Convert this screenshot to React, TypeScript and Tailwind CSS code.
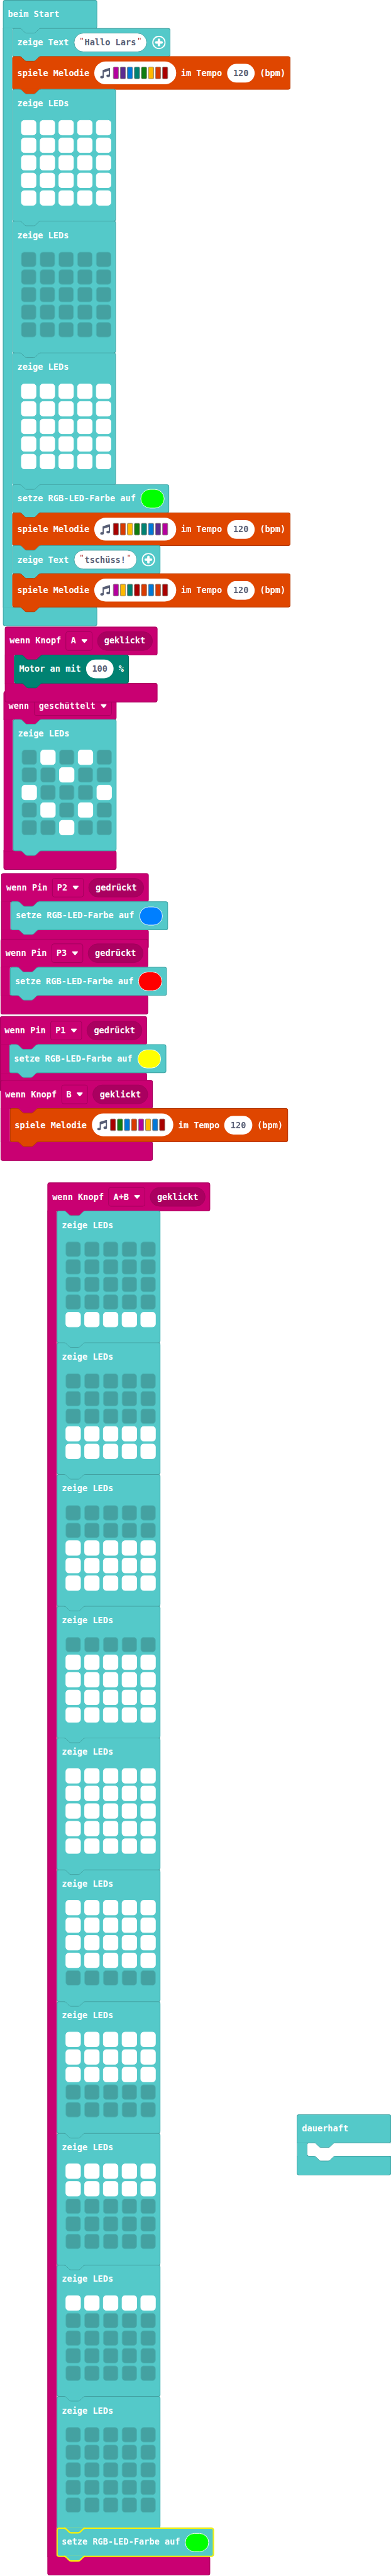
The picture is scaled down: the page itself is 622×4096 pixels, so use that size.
import type { ReactNode } from "react";
import { FaMusic } from "react-icons/fa";

type Tone = "basic" | "music" | "motor" | "input";

const fill: Record<Tone, string> = {
  basic: "bg-[#54c9c9]",
  music: "bg-[#df4600]",
  motor: "bg-[#008272]",
  input: "bg-[#c90072]",
};
const edge: Record<Tone, string> = {
  basic: "shadow-[inset_0_0_0_1px_#43a1a1]",
  music: "shadow-[inset_0_0_0_1px_#b23800]",
  motor: "shadow-[inset_0_0_0_1px_#00685b]",
  input: "shadow-[inset_0_0_0_1px_#a1005b]",
};
const armEdge: Record<Tone, string> = {
  basic: "border-[#43a1a1]",
  music: "border-[#b23800]",
  motor: "border-[#00685b]",
  input: "border-[#a1005b]",
};
const hex: Record<Tone | "hole", string> = {
  basic: "#54c9c9",
  music: "#df4600",
  motor: "#008272",
  input: "#c90072",
  hole: "#ffffff",
};
const edgeHex: Record<Tone, string> = {
  basic: "#43a1a1",
  music: "#b23800",
  motor: "#00685b",
  input: "#a1005b",
};

const CURVE = "c2 0 3 1 4 2l4 4c1 1 2 2 4 2h12c2 0 3-1 4-2l4-4c1-1 2-2 4-2";

function Notch({ color, line, width = 1, bottom }: { color: string; line: string; width?: number; bottom?: boolean }) {
  return (
    <svg
      className={"pointer-events-none absolute left-0 z-10 overflow-visible " + (bottom ? "-bottom-[8px]" : "top-0")}
      width="50"
      height="9"
      viewBox="0 0 50 9"
    >
      <path d={"M12.5 -0.8v1.3" + CURVE + "v-1.3z"} fill={color} />
      <path d={"M12.5 0.5" + CURVE} fill="none" stroke={line} strokeWidth={width} />
    </svg>
  );
}

type BlockProps = {
  tone: Tone;
  above: Tone;
  height: string;
  last?: boolean;
  selected?: boolean;
  children: ReactNode;
};

function Block({ tone, above, height, last, selected, children }: BlockProps) {
  const line = selected ? "#fff200" : edgeHex[tone];
  const ring = selected
    ? "shadow-[inset_0_0_0_1.6px_#fff200,0_0_0_0.8px_#fff200]"
    : edge[tone];
  return (
    <div className={"relative z-10 -mb-px w-max rounded-[4px] " + fill[tone] + " " + ring + " " + height}>
      <Notch color={hex[above]} line={line} width={selected ? 2.4 : 1} />
      {children}
      {last && <Notch color={hex[tone]} line={line} width={selected ? 2.4 : 1} bottom />}
    </div>
  );
}

function Row({ children }: { children: ReactNode }) {
  return <div className="flex h-full items-center gap-[8.4px] px-[8.5px]">{children}</div>;
}

function Label({ children }: { children: ReactNode }) {
  return <span className="whitespace-pre">{children}</span>;
}

function NumberField({ value }: { value: number }) {
  return (
    <span className="flex h-8 w-[47.6px] items-center justify-center rounded-full bg-white text-[#575e75]">
      {value}
    </span>
  );
}

function ColorField({ color }: { color: string }) {
  return <span className={"h-[32.5px] w-[40.6px] rounded-full border border-white " + color} />;
}

function ShowText({ text, above }: { text: string; above: Tone }) {
  return (
    <Block tone="basic" above={above} height="h-[49px]">
      <Row>
        <Label>zeige Text</Label>
        <span className="flex h-[33px] items-center rounded-full border border-[#43a1a1] bg-white px-[10px] text-[#575e75]">
          <span className="w-[7.5px] -translate-y-[3px] font-['Liberation_Sans'] text-[15px] font-normal text-[#b03030]">"</span>
          <Label>{text}</Label>
          <span className="w-[8px] -translate-y-[3px] pl-[3px] font-['Liberation_Sans'] text-[15px] font-normal text-[#b03030]">"</span>
        </span>
        <svg width="23" height="23" viewBox="0 0 23 23" fill="none" stroke="white">
          <circle cx="11.5" cy="11.5" r="10.5" strokeWidth="2" />
          <path d="M11.5 6.9v9.2M6.9 11.5h9.2" strokeWidth="4.2" strokeLinecap="round" />
        </svg>
      </Row>
    </Block>
  );
}

const notes: Record<string, string> = {
  p: "bg-[#b4009e]",
  v: "bg-[#5c2d91]",
  b: "bg-[#0078d7]",
  t: "bg-[#008272]",
  g: "bg-[#107c10]",
  y: "bg-[#ffb900]",
  o: "bg-[#d83b01]",
  r: "bg-[#a80000]",
};

function Melody({ tune, above, last }: { tune: string; above: Tone; last?: boolean }) {
  return (
    <Block tone="music" above={above} height="h-[57.2px]" last={last}>
      <Row>
        <Label>spiele Melodie</Label>
        <span className="flex h-[39px] w-[139.5px] items-center rounded-full bg-white pl-[9.5px]">
          <FaMusic className="mr-[5px] h-[18px] w-[17px] text-[#575e75]" preserveAspectRatio="none" />
          <span className="flex gap-[2px]">
            {tune.split("").map((n, i) => (
              <span key={i} className={"h-[21px] w-[10px] rounded-[2px] border border-[#8a8078] " + notes[n]} />
            ))}
          </span>
        </span>
        <Label>im Tempo</Label>
        <NumberField value={120} />
        <Label>(bpm)</Label>
      </Row>
    </Block>
  );
}

function SetColor({ color, above, last, selected }: { color: string; above: Tone; last?: boolean; selected?: boolean }) {
  return (
    <Block tone="basic" above={above} height="h-[49px]" last={last} selected={selected}>
      <Row>
        <Label>setze RGB-LED-Farbe auf</Label>
        <ColorField color={color} />
      </Row>
    </Block>
  );
}

function Leds({ rows, above, last }: { rows: string[]; above: Tone; last?: boolean }) {
  return (
    <Block tone="basic" above={above} height="h-[225.9px]" last={last}>
      <div className="w-[177.2px]">
        <div className="flex h-[49px] items-center px-[8.5px]">zeige LEDs</div>
        <div className="grid w-max grid-cols-5 gap-x-1.5 gap-y-1 pl-[14.8px] pt-[3.5px]">
          {rows
            .join("")
            .split("")
            .map((c, i) => (
              <span
                key={i}
                className={
                  "size-[26px] rounded-[5.5px] border " +
                  (c === "#" ? "border-white bg-white" : "border-[#4bb5b5] bg-[#44a1a1]")
                }
              />
            ))}
        </div>
      </div>
    </Block>
  );
}

function Dropdown({ value }: { value: string }) {
  return (
    <span className="flex h-[33px] items-center gap-[9px] rounded-[4px] border border-[#a1005b] px-[7.5px]">
      <Label>{value}</Label>
      <svg width="10.4" height="7" viewBox="0 0 10.4 7" fill="white">
        <path d="M1.2 0.2h8c1 0 1.4.8.8 1.5L6.2 6.2c-.6.7-1.4.7-2 0L.4 1.7C-.2 1 .2.2 1.2.2z" />
      </svg>
    </span>
  );
}

function EventHead({ label, value, action }: { label: string; value: string; action?: string }) {
  return (
    <div className="flex h-full items-center gap-[8px] px-[8.3px]">
      <Label>{label}</Label>
      <Dropdown value={value} />
      {action && (
        <span className="flex h-[33px] items-center rounded-full border border-[#a1005b] bg-[#aa0060] px-[11.3px]">
          {action}
        </span>
      )}
    </div>
  );
}

type HatProps = { tone: Tone; place: string; head: ReactNode; width?: string; children: ReactNode };

function Hat({ tone, place, head, width = "w-max", children }: HatProps) {
  return (
    <section className={"absolute " + place}>
      <div className={width}>
        <div className={"-mb-px h-[49px] rounded-[4px] rounded-bl-none " + fill[tone] + " " + edge[tone]}>{head}</div>
        <div className="flex w-0">
          <div className={"relative z-10 w-4 shrink-0 border-l " + fill[tone] + " " + armEdge[tone]} />
          <div className="pb-px">{children}</div>
        </div>
        <div className={"-mt-px h-[33px] rounded-[4px] rounded-tl-none " + fill[tone] + " " + edge[tone]} />
      </div>
    </section>
  );
}

const ON = "#####";
const OFF = ".....";
const full = [ON, ON, ON, ON, ON];
const blank = [OFF, OFF, OFF, OFF, OFF];
const wave = [
  [OFF, OFF, OFF, OFF, ON],
  [OFF, OFF, OFF, ON, ON],
  [OFF, OFF, ON, ON, ON],
  [OFF, ON, ON, ON, ON],
  full,
  [ON, ON, ON, ON, OFF],
  [ON, ON, ON, OFF, OFF],
  [ON, ON, OFF, OFF, OFF],
  [ON, OFF, OFF, OFF, OFF],
  blank,
];

export default function App() {
  return (
    <main className="h-[4096px] w-[622px] overflow-hidden bg-white">
      <div className="relative h-[4398px] w-[668px] origin-top-left scale-[0.9313] font-['DejaVu_Sans_Mono',monospace] text-[14.62px] leading-none font-bold text-white">
        <Hat
          tone="basic"
          place="left-[5px] top-[0.3px]"
          width="w-[161px]"
          head={<div className="flex h-full items-center px-[8.5px]">beim Start</div>}
        >
          <ShowText text="Hallo Lars" above="basic" />
          <Melody tune="pvbtgyor" above="basic" />
          <Leds rows={full} above="music" />
          <Leds rows={blank} above="basic" />
          <Leds rows={full} above="basic" />
          <SetColor color="bg-[#00ff00]" above="basic" />
          <Melody tune="roygtbvp" above="basic" />
          <ShowText text="tschüss!" above="music" />
          <Melody tune="pytrobor" above="basic" last />
        </Hat>

        <Hat
          tone="input"
          place="left-[6.2px] top-[1179.6px]"
          head={
            <div className="h-full translate-y-[1px]">
              <EventHead label="wenn" value="geschüttelt" />
            </div>
          }
        >
          <Leds rows={[".#.#.", "..#..", "#...#", ".#.#.", "..#.."]} above="input" last />
        </Hat>

        <Hat
          tone="input"
          place="left-[8.2px] top-[1069.5px] z-20"
          head={<EventHead label="wenn Knopf" value="A" action="geklickt" />}
        >
          <Block tone="motor" above="input" height="h-[49px]" last>
            <Row>
              <Label>Motor an mit</Label>
              <NumberField value={100} />
              <Label>%</Label>
            </Row>
          </Block>
        </Hat>

        <Hat
          tone="input"
          place="left-[2.4px] top-[1491.3px] z-10"
          head={<EventHead label="wenn Pin" value="P2" action="gedrückt" />}
        >
          <SetColor color="bg-[#007fff]" above="input" last />
        </Hat>

        <Hat
          tone="input"
          place="left-[1.2px] top-[1602.8px] z-20"
          head={<EventHead label="wenn Pin" value="P3" action="gedrückt" />}
        >
          <SetColor color="bg-[#ff0000]" above="input" last />
        </Hat>

        <Hat
          tone="input"
          place="left-[-0.5px] top-[1735.3px] z-10"
          head={<EventHead label="wenn Pin" value="P1" action="gedrückt" />}
        >
          <SetColor color="bg-[#ffff00]" above="input" last />
        </Hat>

        <Hat
          tone="input"
          place="left-[0.6px] top-[1844.4px] z-20"
          head={<EventHead label="wenn Knopf" value="B" action="geklickt" />}
        >
          <Melody tune="rgbopybr" above="input" last />
        </Hat>

        <Hat
          tone="input"
          place="left-[81px] top-[2019.4px]"
          head={<EventHead label="wenn Knopf" value="A+B" action="geklickt" />}
        >
          {wave.map((rows, i) => (
            <Leds key={i} rows={rows} above={i === 0 ? "input" : "basic"} />
          ))}
          <SetColor color="bg-[#00ff00]" above="basic" last selected />
        </Hat>

        <section className="absolute left-[507.3px] top-[3609.8px] w-[160.7px]">
          <div className="flex h-[49px] items-center rounded-[4px] rounded-bl-none bg-[#54c9c9] px-[8.5px] shadow-[inset_0_0_0_1px_#43a1a1]">
            dauerhaft
          </div>
          <div className="relative z-10 -my-px border-l border-[#43a1a1]">
            <div className="w-6 bg-[#54c9c9] pl-[15.5px]">
              <div className="relative h-[24.6px] w-[144.2px] rounded-l-[4px] border border-r-0 border-[#43a1a1] bg-white">
                <div className="absolute -left-px -top-px">
                  <Notch color={hex.basic} line={edgeHex.basic} />
                </div>
                <div className="absolute -left-px top-[22.6px]">
                  <Notch color={hex.hole} line={edgeHex.basic} />
                </div>
              </div>
            </div>
          </div>
          <div className="h-[33px] rounded-[4px] rounded-tl-none bg-[#54c9c9] shadow-[inset_0_0_0_1px_#43a1a1]" />
        </section>
      </div>
    </main>
  );
}
